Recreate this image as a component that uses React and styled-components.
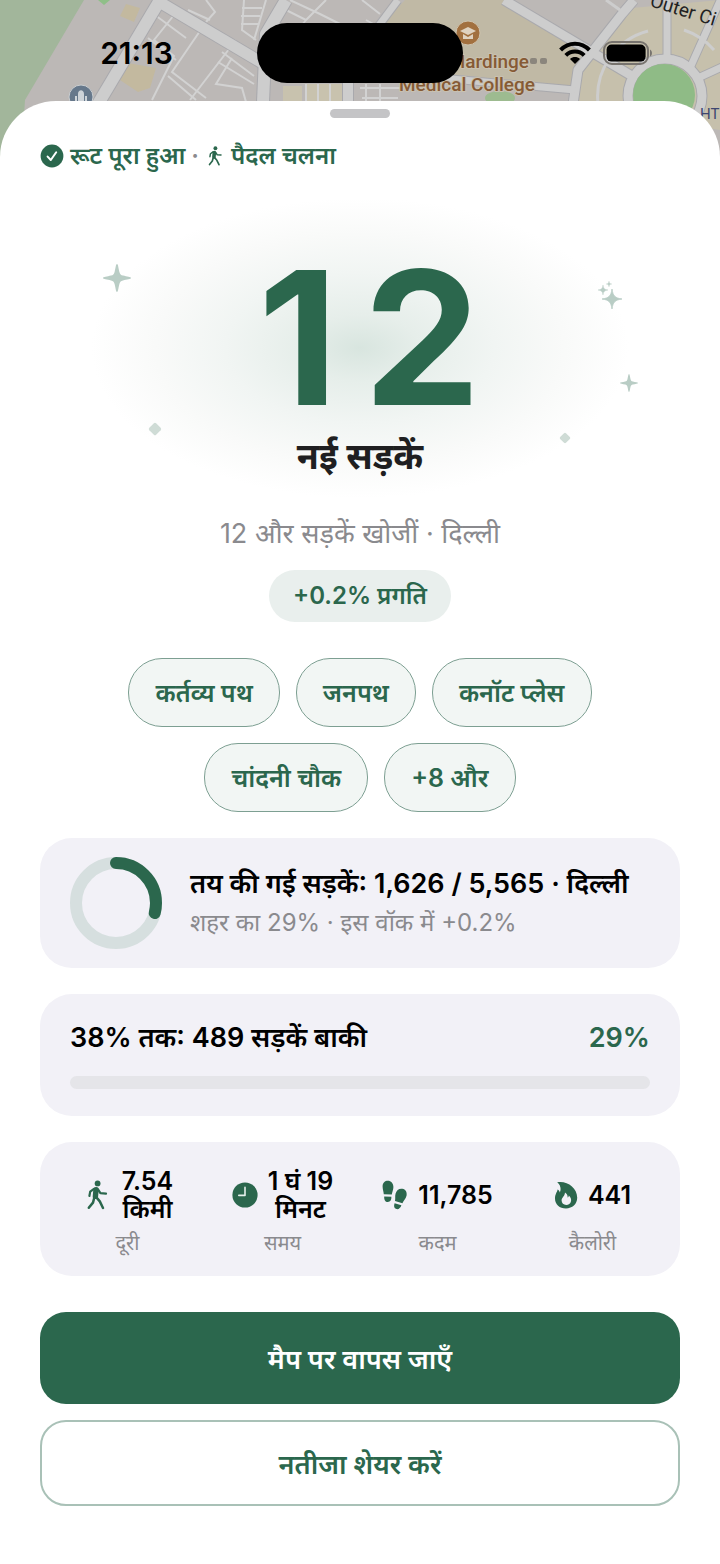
import React from 'react';
import styled, { createGlobalStyle } from 'styled-components';

const GREEN = '#2b674d';

const newStreets = 12;

const streets = ['कर्तव्य पथ', 'जनपथ', 'कनॉट प्लेस', 'चांदनी चौक', '+8 और'];

const stats = [
  { icon: <WalkIcon size={30} />, value: '7.54\nकिमी', label: 'दूरी' },
  { icon: <ClockIcon />, value: '1 घं 19\nमिनट', label: 'समय' },
  { icon: <StepsIcon />, value: '11,785', label: 'कदम' },
  { icon: <FlameIcon />, value: '441', label: 'कैलोरी' },
];

function WalkIcon({ size }) {
  return (
    <svg width={size} height={size} viewBox="0 0 30 30" aria-hidden="true">
      <circle cx="15.6" cy="3.4" r="2.9" fill={GREEN} />
      <g fill="none" stroke={GREEN} strokeLinecap="round" strokeLinejoin="round">
        <path d="M14 9.8 L13.4 16.4" strokeWidth="5.4" />
        <path d="M12 8.8 L8.2 11.6 L7.4 16" strokeWidth="2.2" />
        <path d="M16 9.4 L18.4 13.2 L24 13.6" strokeWidth="2.2" />
        <path d="M14.4 17.4 L17.8 21.4 L21 28" strokeWidth="2.5" />
        <path d="M12.2 18 L11 22.6 L6.8 27.8" strokeWidth="2.5" />
      </g>
    </svg>
  );
}

function CheckIcon() {
  return (
    <svg width="24" height="24" viewBox="0 0 24 24" aria-hidden="true">
      <circle cx="12" cy="12" r="11.4" fill={GREEN} />
      <path d="M7.6 12.6 L10.8 16 L16.2 8.2" fill="none" stroke="#fff" strokeWidth="2" strokeLinecap="round" strokeLinejoin="round" />
    </svg>
  );
}

function ClockIcon() {
  return (
    <svg width="26" height="26" viewBox="0 0 26 26" aria-hidden="true">
      <circle cx="13" cy="13" r="12.6" fill={GREEN} />
      <path d="M13 5.4 V13.4 H6.8" fill="none" stroke="#e6f0ec" strokeWidth="1.6" strokeLinecap="round" strokeLinejoin="round" />
    </svg>
  );
}

function StepsIcon() {
  return (
    <svg width="26" height="30" viewBox="0 0 26 30" fill={GREEN} aria-hidden="true">
      <path d="M1.8 14.2 C1.6 11 0.6 9.6 0.6 6.4 C0.6 2.8 3 0.8 5.8 0.8 C9 0.8 11.4 3.4 11.4 7 C11.4 10 10.2 11.8 9.8 14.6 Z" />
      <path d="M2.2 16.4 L9.4 16.8 C9.6 19.8 8.4 22 5.8 22 C3.2 22 2 19.6 2.2 16.4 Z" />
      <path d="M13 21 C13.6 18 12.8 16.8 13.6 13.6 C14.4 10.2 17.2 8.2 20.4 8.8 C23.6 9.4 25.2 12.2 24.6 15.6 C23.8 19 21.8 20.4 20.4 23.2 Z" />
      <path d="M12.6 23.2 L19.4 25.2 C18.4 28 16.6 29.6 14.4 29 C12 28.4 11.6 26 12.6 23.2 Z" />
    </svg>
  );
}

function FlameIcon() {
  return (
    <svg width="24" height="28" viewBox="0 0 24 28" aria-hidden="true">
      <path
        d="M3.2 1.2 C13 -0.6 23 6.4 23.2 16.4 C23.4 23 18.4 27.4 12 27.4 C5.6 27.4 1 23.4 1 17.4 C1 13 3.2 11 3.6 8.4 C4.8 9 5.6 10.2 5.8 11.4 C7.4 8.4 6.6 3.6 3.2 1.2 Z"
        fill={GREEN}
      />
      <path
        d="M11 11.4 C13.4 13 13.8 14.8 13.6 16.4 C14.4 16 14.8 15.2 14.8 14.4 C17 16.4 17.4 18.4 17 20.2 C16.4 22.8 14.6 24 12.2 24 C9.6 24 7.6 22.4 7.6 19.6 C7.6 16.4 10.8 15.2 11 11.4 Z"
        fill="#f2f1f7"
      />
    </svg>
  );
}

function Sparkle({ size }) {
  return (
    <svg width={size} height={size} viewBox="0 0 28 28" fill="#b9cdc5" aria-hidden="true">
      <path d="M14 0 C15.2 0 15.4 4.4 16.4 8 C17.2 10.6 17.8 11 20 11.6 C23.8 12.6 28 12.8 28 14 C28 15.2 23.8 15.4 20 16.4 C17.8 17 17.2 17.4 16.4 20 C15.4 23.6 15.2 28 14 28 C12.8 28 12.6 23.6 11.6 20 C10.8 17.4 10.2 17 8 16.4 C4.2 15.4 0 15.2 0 14 C0 12.8 4.2 12.6 8 11.6 C10.2 11 10.8 10.6 11.6 8 C12.6 4.4 12.8 0 14 0 Z" />
    </svg>
  );
}

function Sparkles() {
  const star = 'M0 -10 C1 -3 3 -1 10 0 C3 1 1 3 0 10 C-1 3 -3 1 -10 0 C-3 -1 -1 -3 0 -10 Z';
  return (
    <svg width="26" height="30" viewBox="0 0 26 30" fill="#b9cdc5" stroke="#b9cdc5" strokeWidth="0.8" strokeLinejoin="round" aria-hidden="true">
      <path d={star} transform="translate(15 19)" />
      <path d={star} transform="translate(6 10) scale(0.5)" />
      <path d={star} transform="translate(12 4) scale(0.3)" />
    </svg>
  );
}

function Diamond({ size }) {
  return (
    <svg width={size} height={size} viewBox="0 0 14 14" aria-hidden="true">
      <rect x="2.2" y="2.2" width="9.6" height="9.6" rx="1.6" transform="rotate(45 7 7)" fill="#cfdcd6" />
    </svg>
  );
}

function Ring({ percent }) {
  const length = 2 * Math.PI * 40;
  return (
    <svg width="92" height="92" viewBox="0 0 92 92" fill="none" strokeWidth="12" aria-hidden="true">
      <circle cx="46" cy="46" r="40" stroke="#d6dfdf" />
      <circle
        cx="46"
        cy="46"
        r="40"
        stroke={GREEN}
        strokeLinecap="round"
        strokeDasharray={`${(length * percent) / 100} ${length}`}
        transform="rotate(-90 46 46)"
      />
    </svg>
  );
}

function CityMap() {
  return (
    <MapSvg viewBox="0 0 720 180" preserveAspectRatio="xMidYMin slice" aria-hidden="true">
      <rect width="720" height="180" fill="#bcb8b6" />
      <path d="M0 0 H84 L25 100 L20 180 H0 Z" fill="#a2b69b" />
      <path d="M98 0 H110 L104 5 Z" fill="#8fbf88" />
      <path d="M126 4 L140 8 L134 22 L120 16 Z M122 62 L156 68 L150 88 L138 92 L120 80 Z" fill="#c3b99f" />
      <path d="M405 0 H506 L590 50 L572 88 L470 76 L380 68 L376 30 Z" fill="#c0b9a5" />
      <path d="M632 8 L720 0 V130 L576 108 L580 76 L600 44 Z" fill="#c6c0ac" />
      <path d="M283 86 H302 V102 H283 Z M306 84 H342 V102 H306 Z" fill="#c8c2ae" />
      <g fill="none" stroke="#d2d2d2" strokeWidth="2">
        <path d="M155 15 L186 38 M178 10 L154 40 L174 56 L152 100 M202 28 L172 72 L206 98 M168 76 L196 100 M236 40 L190 100 M148 38 L176 60" />
        <path d="M206 0 L215 12 L206 22 M188 10 L210 20 M244 0 L242 30 L256 40 M242 8 H262 M241 16 H260 M241 24 H258 M266 0 L254 40" />
        <path d="M222 52 L254 76 M218 62 L254 84 M232 58 L216 84 L242 88 L246 102 M286 10 L306 20 L326 0 M306 20 L298 30 M290 0 L320 14 L344 26" />
        <path d="M306 84 V102 M318 84 V102 M330 84 V102 M362 0 L380 14 M366 20 L384 30 M360 88 H400 M366 84 V102 M380 84 V102 M362 98 H398" />
      </g>
      <g fill="none" stroke="#a9a9ad" strokeLinejoin="round">
        <path d="M160 0 L98 104" strokeWidth="14" />
        <path d="M156 0 L264 64" strokeWidth="13" />
        <path d="M286 0 L266 34 L263 102" strokeWidth="14" />
        <path d="M348 70 V102" strokeWidth="12" />
        <path d="M398 0 L374 32" strokeWidth="9" />
        <path d="M504 0 L632 76" strokeWidth="11" />
        <path d="M634 0 L622 14 L578 70 L573 104" strokeWidth="11" />
        <path d="M440 78 L575 90" strokeWidth="9" />
        <circle cx="665" cy="96" r="37" strokeWidth="11" />
        <path d="M667 0 V60 M724 -8 L690 68 M698 78 L724 66" strokeWidth="9" />
      </g>
      <g fill="none" stroke="#cdcdcd" strokeLinejoin="round">
        <path d="M160 0 L98 104" strokeWidth="12" />
        <path d="M156 0 L264 64" strokeWidth="11" />
        <path d="M286 0 L266 34 L263 102" strokeWidth="12" />
        <path d="M348 70 V102" strokeWidth="10" />
        <path d="M398 0 L374 32" strokeWidth="7" />
        <path d="M504 0 L632 76" strokeWidth="9" />
        <path d="M634 0 L622 14 L578 70 L573 104" strokeWidth="9" />
        <path d="M440 78 L575 90" strokeWidth="7" />
        <circle cx="665" cy="96" r="37" strokeWidth="9" />
        <path d="M667 0 V60 M724 -8 L690 68 M698 78 L724 66" strokeWidth="7" />
        <path d="M598 104 A68 68 0 0 1 648 31 M684 30 A68 68 0 0 1 714 50 M606 0 L620 10" strokeWidth="3" />
      </g>
      <circle cx="664" cy="95" r="31" fill="#8fbb86" />
      <ellipse cx="500" cy="98" rx="15" ry="7" fill="#9dbb90" />
      <circle cx="81" cy="97" r="12" fill="#66788b" stroke="#c9cdd0" />
      <path d="M75 96 H77 V104 H75 Z M85 96 H87 V104 H85 Z M78 94 C78 89 84 89 84 94 V104 H78 Z" fill="#cdd3d8" />
      <circle cx="468" cy="33" r="12" fill="#a2703f" stroke="#cfc3ae" />
      <path d="M460 31 L468 27 L476 31 L468 35 Z M463 34 L468 37 L473 34 V39 H463 Z" fill="#dfd2c0" />
      <MapText x="529" y="68" textAnchor="end">Hardinge</MapText>
      <MapText x="535" y="91" textAnchor="end">Medical College</MapText>
      <StreetText x="649" y="6" transform="rotate(17 649 6)">Outer Ci</StreetText>
      <StationText x="700" y="119">HT</StationText>
    </MapSvg>
  );
}

function StatusBar() {
  return (
    <StatusRow>
      <Time>21:13</Time>
      <Island />
      <StatusIcons>
        <SignalDots width="20" height="8" viewBox="0 0 20 8" fill="#8b867d" aria-hidden="true">
          <rect x="3" y="1" width="7" height="6" rx="2" />
          <rect x="13" y="1" width="7" height="6" rx="2" />
        </SignalDots>
        <svg width="32" height="24" viewBox="0 0 32 24" fill="none" stroke="#000" strokeWidth="4" aria-hidden="true">
          <path d="M1.6 9 C9.6 0.6 22.4 0.6 30.4 9" />
          <path d="M6.8 14.4 C12 9.2 20 9.2 25.2 14.4" />
          <path d="M11 18 C14 15.4 18 15.4 21 18 L16 23 Z" fill="#000" stroke="none" />
        </svg>
        <svg width="50" height="24" viewBox="0 0 50 24" aria-hidden="true">
          <rect x="1" y="1" width="44" height="22" rx="8" fill="none" stroke="#77736e" strokeWidth="2" />
          <rect x="3.6" y="3.6" width="39" height="17" rx="5" fill="#000" />
          <path d="M47 8.4 C49.6 9.8 49.6 14.2 47 15.6 Z" fill="#77736e" />
        </svg>
      </StatusIcons>
    </StatusRow>
  );
}

function App() {
  return (
    <>
      <GlobalStyle />
      <Screen>
        <MapHeader>
          <CityMap />
          <StatusBar />
        </MapHeader>
        <Sheet>
          <Handle />
          <RouteState>
            <CheckIcon />
            <span>रूट पूरा हुआ</span>
            <Dot>·</Dot>
            <WalkIcon size={20} />
            <span>पैदल चलना</span>
          </RouteState>

          <Hero>
            <Ornament $left="12%" $top="66px"><Sparkle size={28} /></Ornament>
            <Ornament $left="89%" $top="82px"><Sparkles /></Ornament>
            <Ornament $left="92%" $top="176px"><Sparkle size={18} /></Ornament>
            <Ornament $left="18%" $top="224px"><Diamond size={14} /></Ornament>
            <Ornament $left="82%" $top="234px"><Diamond size={12} /></Ornament>
            <Counter>
              {String(newStreets).split('').map((digit, i) => (
                <Digit key={i}>{digit}</Digit>
              ))}
            </Counter>
            <HeroLabel>नई सड़कें</HeroLabel>
          </Hero>

          <Summary>12 और सड़कें खोजीं · दिल्ली</Summary>
          <ProgressPill>+0.2% प्रगति</ProgressPill>

          <Chips>
            {streets.map((street) => (
              <Chip key={street} type="button">{street}</Chip>
            ))}
          </Chips>

          <Cards>
            <CityCard>
              <Ring percent={29} />
              <div>
                <CardTitle>तय की गई सड़कें: 1,626 / 5,565 · दिल्ली</CardTitle>
                <CardText>शहर का 29% · इस वॉक में +0.2%</CardText>
              </div>
            </CityCard>

            <GoalCard>
              <GoalRow>
                <CardTitle>38% तक: 489 सड़कें बाकी</CardTitle>
                <GoalPercent>29%</GoalPercent>
              </GoalRow>
              <Track />
            </GoalCard>

            <StatsCard>
              {stats.map((stat) => (
                <Stat key={stat.label}>
                  <StatTop>
                    {stat.icon}
                    <StatValue>{stat.value}</StatValue>
                  </StatTop>
                  <StatLabel>{stat.label}</StatLabel>
                </Stat>
              ))}
            </StatsCard>
          </Cards>

          <Actions>
            <PrimaryButton type="button">मैप पर वापस जाएँ</PrimaryButton>
            <OutlineButton type="button">नतीजा शेयर करें</OutlineButton>
          </Actions>
        </Sheet>
      </Screen>
    </>
  );
}

export default App;

const GlobalStyle = createGlobalStyle`
  * {
    box-sizing: border-box;
  }
  body {
    margin: 0;
    background: #fff;
    color: #000;
    font-family: Inter, "Noto Sans", "Noto Sans Devanagari", sans-serif;
  }
  svg {
    display: block;
    flex-shrink: 0;
  }
  p, h1, h2 {
    margin: 0;
  }
`

const Screen = styled.main`
  min-height: 100vh;
  overflow: hidden;
`

const MapHeader = styled.header`
  position: relative;
  height: 180px;
`

const MapSvg = styled.svg`
  position: absolute;
  inset: 0;
  width: 100%;
  height: 100%;
`

const MapText = styled.text`
  font-family: Roboto, sans-serif;
  font-size: 19px;
  font-weight: 500;
  fill: #865a35;
  stroke: #c9c1b0;
  stroke-width: 2px;
  paint-order: stroke;
`

const StreetText = styled.text`
  font-family: Roboto, sans-serif;
  font-size: 19px;
  fill: #222;
`

const StationText = styled.text`
  font-family: Roboto, sans-serif;
  font-size: 15px;
  fill: #3d4670;
`

const StatusRow = styled.div`
  position: relative;
  display: grid;
  grid-template-columns: 1fr 206px 1fr;
  align-items: center;
  padding-top: 23px;
`

const Time = styled.span`
  padding-left: 16px;
  text-align: center;
  font-size: 30px;
  font-weight: 600;
`

const Island = styled.div`
  height: 60px;
  border-radius: 30px;
  background: #000;
`

const StatusIcons = styled.div`
  display: flex;
  align-items: center;
  justify-content: flex-end;
  gap: 12px;
  padding-right: 67px;
`

const SignalDots = styled.svg`
  align-self: flex-end;
`

const Sheet = styled.section`
  position: relative;
  display: flex;
  flex-direction: column;
  align-items: center;
  margin-top: -79px;
  padding: 8px 40px 58px;
  border-radius: 56px 56px 0 0;
  background: #fff;
`

const Handle = styled.div`
  width: 60px;
  height: 9px;
  border-radius: 5px;
  background: #c4c4c6;
`

const RouteState = styled.p`
  display: flex;
  align-items: center;
  align-self: flex-start;
  gap: 6px;
  margin-top: 22px;
  color: ${GREEN};
  font-size: 24px;
  line-height: 32px;
  font-weight: 600;
`

const Dot = styled.span`
  color: #8a8a8e;
`

const Hero = styled.div`
  position: relative;
  display: flex;
  flex-direction: column;
  align-items: center;
  width: 100%;
  height: 300px;
  margin-top: 26px;
  background: radial-gradient(
    ellipse 42% 50% at 50% 50%,
    #d8e5df 0%,
    #e6eeea 22%,
    #f1f5f3 50%,
    #f9faf9 76%,
    #fff 100%
  );
`

const Ornament = styled.div`
  position: absolute;
  left: ${(props) => props.$left};
  top: ${(props) => props.$top};
  transform: translateX(-50%);
`

const Counter = styled.div`
  display: flex;
  margin-top: 48px;
  color: ${GREEN};
  font-size: 186px;
  line-height: 184px;
  font-weight: 700;
`

const Digit = styled.span`
  width: 124px;
  text-align: center;
`

const HeroLabel = styled.h1`
  font-size: 36px;
  line-height: 52px;
  font-weight: 700;
  color: #1f1f21;
`

const Summary = styled.p`
  margin-top: 18px;
  color: #8a8a8e;
  font-size: 27px;
  line-height: 36px;
`

const ProgressPill = styled.div`
  margin-top: 18px;
  padding: 8px 24px;
  border-radius: 26px;
  background: #e9efed;
  color: ${GREEN};
  font-size: 24px;
  line-height: 36px;
  font-weight: 600;
`

const Chips = styled.div`
  display: flex;
  flex-wrap: wrap;
  justify-content: center;
  gap: 16px;
  max-width: 520px;
  margin-top: 36px;
`

const Chip = styled.button`
  height: 69px;
  padding: 0 26px 2px;
  border: 1px solid #7d9f92;
  border-radius: 34px;
  background: #f2f6f4;
  color: ${GREEN};
  font: inherit;
  font-size: 25px;
  font-weight: 600;
`

const Cards = styled.div`
  display: grid;
  gap: 26px;
  width: 100%;
  margin-top: 26px;
`

const Card = styled.section`
  border-radius: 32px;
  background: #f2f1f7;
`

const CityCard = styled(Card)`
  display: flex;
  align-items: center;
  gap: 28px;
  min-height: 130px;
  padding: 0 30px;
`

const CardTitle = styled.h2`
  font-size: 27px;
  line-height: 40px;
  font-weight: 600;
  white-space: nowrap;
`

const CardText = styled.p`
  color: #8a8a8e;
  font-size: 24px;
  line-height: 38px;
`

const GoalCard = styled(Card)`
  min-height: 122px;
  padding: 24px 30px 20px;
`

const GoalRow = styled.div`
  display: flex;
  justify-content: space-between;
`

const GoalPercent = styled.span`
  color: ${GREEN};
  font-size: 27px;
  line-height: 40px;
  font-weight: 600;
`

const Track = styled.div`
  height: 13px;
  margin-top: 18px;
  border-radius: 7px;
  background: #e5e5e9;
`

const StatsCard = styled(Card)`
  display: grid;
  grid-template-columns: repeat(4, 1fr);
  padding: 24px 10px 20px;
`

const Stat = styled.div`
  display: flex;
  flex-direction: column;
  align-items: center;
`

const StatTop = styled.div`
  display: flex;
  align-items: center;
  gap: 10px;
  height: 58px;
`

const StatValue = styled.strong`
  font-size: 25px;
  line-height: 28px;
  font-weight: 600;
  text-align: center;
  white-space: pre-line;
`

const StatLabel = styled.span`
  margin-top: 6px;
  color: #8a8a8e;
  font-size: 20px;
  line-height: 26px;
`

const Actions = styled.div`
  display: grid;
  gap: 16px;
  width: 100%;
  margin-top: 36px;
`

const Button = styled.button`
  width: 100%;
  border-radius: 26px;
  font: inherit;
  font-size: 27px;
  font-weight: 600;
`

const PrimaryButton = styled(Button)`
  height: 92px;
  border: 0;
  background: ${GREEN};
  color: #fff;
`

const OutlineButton = styled(Button)`
  height: 86px;
  border: 2px solid #a9c1b7;
  background: #fff;
  color: ${GREEN};
`
